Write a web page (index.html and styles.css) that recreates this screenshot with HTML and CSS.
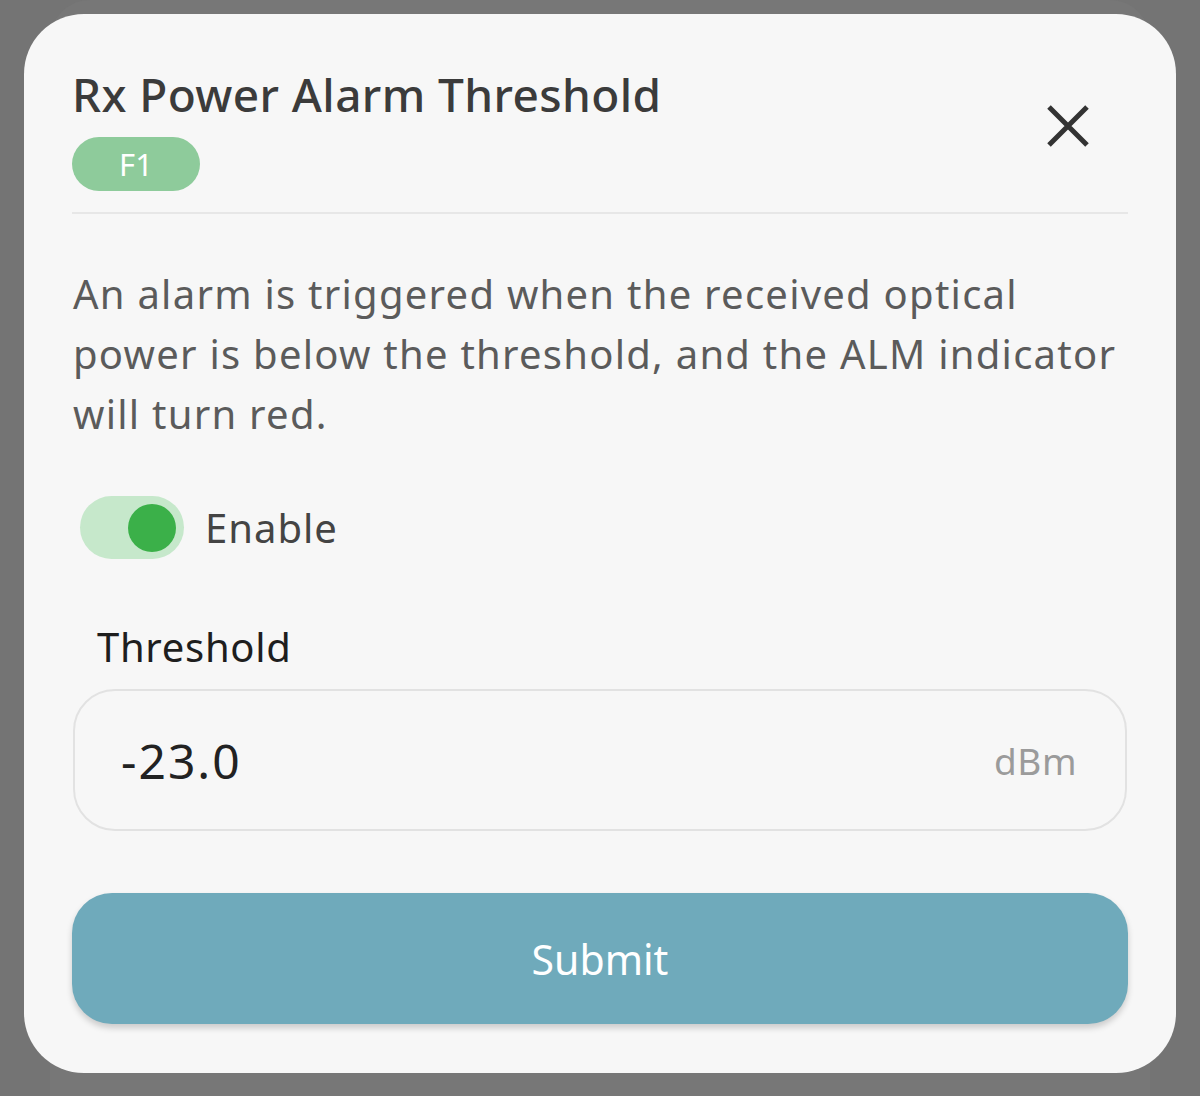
FILE: index.html
```html
<!DOCTYPE html>
<html lang="en">
<head>
<meta charset="utf-8">
<title>Rx Power Alarm Threshold</title>
<link rel="stylesheet" href="styles.css">
</head>
<body>
<div class="backdrop"><div class="under-card"></div></div>
<div class="dialog">
  <div class="header">
    <div class="heading">
      <h1 class="title">Rx Power Alarm Threshold</h1>
      <span class="badge">F1</span>
    </div>
    <button class="close" aria-label="Close">
      <svg width="44" height="44" viewBox="0 0 44 44"><path d="M3 3 L41 41 M41 3 L3 41" stroke="#333" stroke-width="5" fill="none"/></svg>
    </button>
  </div>
  <p class="desc">An alarm is triggered when the received optical<br>power is below the threshold, and the ALM indicator<br>will turn red.</p>
  <div class="toggle-row">
    <span class="toggle"><span class="knob"></span></span>
    <span class="toggle-label">Enable</span>
  </div>
  <div class="field-label">Threshold</div>
  <div class="input">
    <span class="value">-23.0</span>
    <span class="unit">dBm</span>
  </div>
  <button class="submit">Submit</button>
</div>
</body>
</html>
```
FILE: styles.css
```css
html, body {
  margin: 0;
  padding: 0;
}
body {
  width: 1200px;
  height: 1096px;
  background: #747474;
  font-family: "Noto Sans", "Open Sans", sans-serif;
  position: relative;
  overflow: hidden;
  padding-top: 14px;
  box-sizing: border-box;
}
.backdrop {
  position: absolute;
  inset: 0;
}
.under-card {
  position: absolute;
  left: 50px;
  right: 50px;
  top: 0;
  bottom: -40px;
  background: #777777;
  border-radius: 40px;
}
.dialog {
  position: relative;
  margin-left: 24px;
  width: 1152px;
  height: 1059px;
  box-sizing: border-box;
  background: #f7f7f7;
  border-radius: 60px;
  padding: 0 48px;
}
.header {
  display: flex;
  justify-content: space-between;
  align-items: flex-start;
  border-bottom: 2px solid #e7e7e7;
  padding-top: 64px;
  height: 200px;
  box-sizing: border-box;
}
.heading {
  display: flex;
  flex-direction: column;
  align-items: flex-start;
}
.title {
  margin: 0;
  font-size: 46px;
  line-height: 32px;
  font-weight: 500;
  color: #3b3b3b;
  letter-spacing: 0.4px;
}
.badge {
  margin-top: 27px;
  width: 128px;
  height: 54px;
  border-radius: 27px;
  background: #8ecb9b;
  color: #fff;
  font-size: 31px;
  line-height: 54px;
  text-align: center;
}
.close {
  margin: 26px 38px 0 0;
  padding: 0;
  border: 0;
  background: none;
  width: 44px;
  height: 44px;
}
.close svg {
  display: block;
}
.desc {
  margin: 50px 0 0 1px;
  font-size: 40px;
  line-height: 60px;
  color: #5b5b5b;
  white-space: nowrap;
  letter-spacing: 1.25px;
}
.toggle-row {
  display: flex;
  align-items: center;
  margin-top: 52px;
  padding-left: 8px;
}
.toggle {
  width: 104px;
  height: 63px;
  border-radius: 32px;
  background: #c6e8cb;
  display: flex;
  align-items: center;
  justify-content: flex-end;
  padding-right: 8px;
  box-sizing: border-box;
}
.knob {
  width: 48px;
  height: 48px;
  border-radius: 50%;
  background: #3bb049;
}
.toggle-label {
  margin-left: 21px;
  font-size: 40px;
  color: #444;
  letter-spacing: 1px;
}
.field-label {
  margin: 64px 0 0 25px;
  font-size: 40px;
  line-height: 48px;
  color: #1e1e1e;
  letter-spacing: 0.7px;
}
.input {
  margin-top: 18px;
  margin-left: 1px;
  width: 1054px;
  height: 142px;
  box-sizing: border-box;
  border: 2px solid #e2e2e2;
  border-radius: 42px;
  display: flex;
  align-items: center;
  justify-content: space-between;
  padding: 0 48px 0 46px;
}
.value {
  font-size: 48px;
  color: #222;
  letter-spacing: 2px;
}
.unit {
  font-size: 37px;
  color: #9b9b9b;
  letter-spacing: 0.5px;
}
.submit {
  display: block;
  margin-top: 62px;
  width: 1056px;
  height: 131px;
  border: 0;
  border-radius: 40px;
  background: #6faabb;
  color: #fff;
  font-family: inherit;
  font-size: 41px;
  box-shadow: 0 4px 6px rgba(0, 0, 0, 0.18);
}
```
